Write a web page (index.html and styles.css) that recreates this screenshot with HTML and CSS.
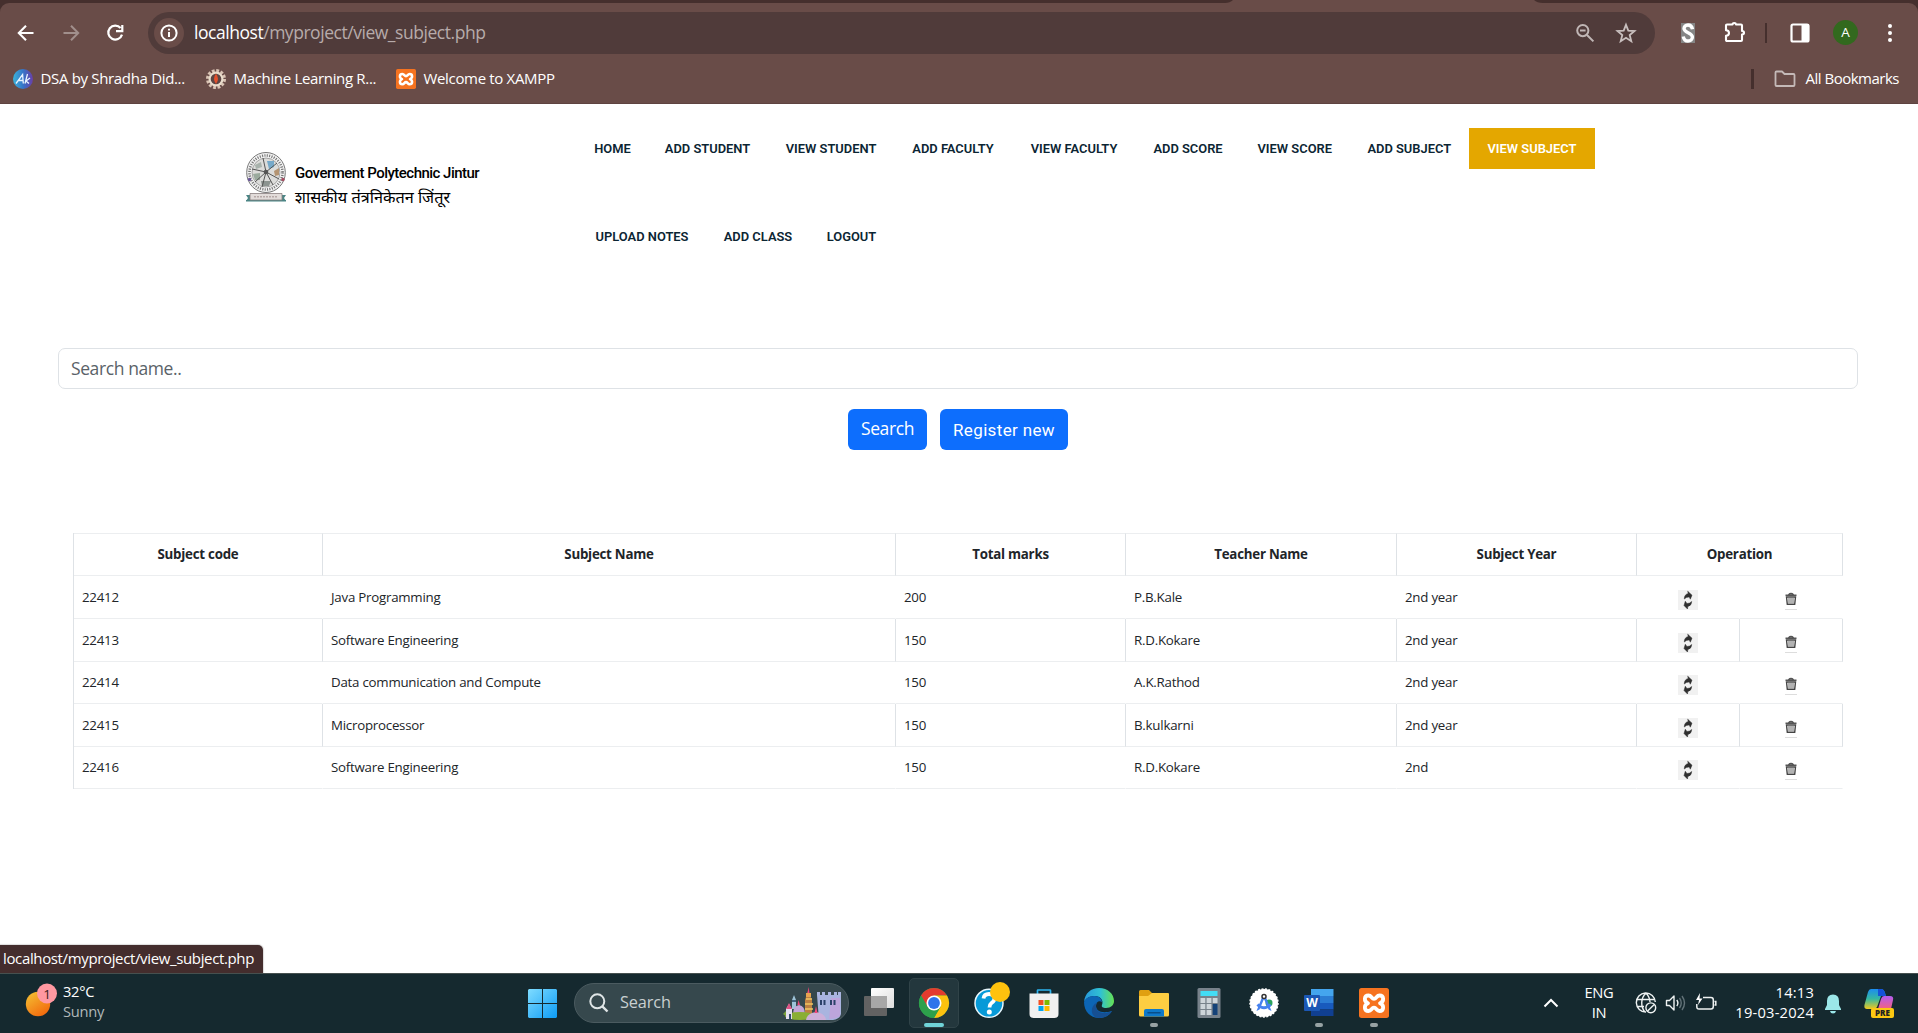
FILE: index.html
```html
<!DOCTYPE html>
<html lang="en">
<head>
<meta charset="utf-8">
<title>View Subject</title>
<link rel="stylesheet" href="styles.css">
</head>
<body>
<div class="screen">

<header class="browser">
  <div class="tabstrip"><svg width="318" height="3" viewBox="0 0 318 3"><path d="M0 3Q5 3 8 0H309Q312 3 318 3Z" fill="#694c48"/></svg></div>
  <div class="toolbar">
    <div class="navbtns">
      <svg width="24" height="24" viewBox="0 0 24 24" fill="none" stroke="#fff" stroke-width="2.1"><path d="M19.5 12H5M12 4.8L4.8 12L12 19.2"/></svg>
      <svg width="24" height="24" viewBox="0 0 24 24" fill="none" stroke="#a18f8c" stroke-width="2"><path d="M4.5 12H19M12 4.8L19.2 12L12 19.2"/></svg>
      <svg width="24" height="24" viewBox="0 0 24 24" fill="none" stroke="#fff" stroke-width="2.2"><path d="M17.6 7A7 7 0 1 0 19 13.6M19.3 4V10.2H13"/></svg>
    </div>
    <div class="omnibox">
      <span class="info"><svg width="20" height="20" viewBox="0 0 20 20" fill="none" stroke="#fff" stroke-width="2"><circle cx="10" cy="10" r="7.6"/><path d="M10 9V14M10 5.8V7.6"/></svg></span>
      <span class="url"><b>localhost</b>/myproject/view_subject.php</span>
      <svg class="zoomout" width="20" height="20" viewBox="0 0 20 20" fill="none" stroke="#c0b6b5" stroke-width="2"><circle cx="7.8" cy="7.6" r="5.6"/><path d="M12 12L18.4 18.4M5 7.6H10.6"/></svg>
      <svg width="22" height="22" viewBox="0 0 22 22" fill="none" stroke="#c8bfbe" stroke-width="1.8"><path d="M11 2.8L13.3 8.6L19.5 9L14.7 13L16.3 19.2L11 15.8L5.7 19.2L7.3 13L2.5 9L8.7 8.6Z"/></svg>
    </div>
    <div class="exts">
      <svg width="14" height="20" viewBox="0 0 14 20"><rect width="14" height="20" fill="#858585"/><path d="M11.5 6.2C11 3.2 9.2 2 7 2C4.600 2 3 3.600 3 5.600C3 10.200 11.400 9.200 11.400 14C11.400 16.600 9.400 18 7 18C4.600 18 2.800 16.600 2.300 13.400" fill="none" stroke="#fff" stroke-width="3.4"/></svg>
      <svg class="puzzle" width="22" height="22" viewBox="0 0 22 22" fill="none" stroke="#fff" stroke-width="2.1" stroke-linejoin="round"><path d="M2 4.500Q2 3.500 3 3.500H8.500Q8.500 2 10.200 2T12 3.500H17Q18 3.500 18 4.500V10Q20 10 20 11.700T18 13.500V19Q18 20 17 20H3Q2 20 2 19V14.800Q5 14.600 5 12T2 9.200Z"/></svg>
      <i class="sep"></i>
      <svg class="panel" width="20" height="20" viewBox="0 0 20 20"><rect x="1.500" y="1.500" width="17" height="17" rx="1.500" fill="none" stroke="#fff" stroke-width="2.200"/><path d="M11.500 1H19V19H11.500Z" fill="#fff"/></svg>
      <span class="avatar">A</span>
      <svg class="dots" width="6" height="20" viewBox="0 0 6 20" fill="#fff"><circle cx="3" cy="3" r="2"/><circle cx="3" cy="10" r="2"/><circle cx="3" cy="17" r="2"/></svg>
    </div>
  </div>
  <div class="bookmarks">
    <svg width="20" height="20" viewBox="0 0 20 20"><defs><linearGradient id="dsa"><stop offset="0" stop-color="#3ab5dc"/><stop offset=".5" stop-color="#3575c8"/><stop offset="1" stop-color="#6a3ea8"/></linearGradient></defs><circle cx="10" cy="10" r="10" fill="url(#dsa)"/><path d="M3 14.500L9.600 5.500L10.300 14.500M5.500 11.500H10M14.500 5L12 14.500M17 9L13 12L16 14.500" fill="none" stroke="#e8f4ff" stroke-width="1.300"/></svg>
    <span class="bm b1">DSA by Shradha Did...</span>
    <svg width="20" height="20" viewBox="0 0 20 20"><circle cx="10" cy="10" r="8.500" fill="none" stroke="#d9c3b4" stroke-width="3" stroke-dasharray="2.800 1.650"/><circle cx="10" cy="10" r="7.500" fill="#e9dccb"/><circle cx="10" cy="10" r="5.300" fill="#5b4644"/><path d="M10 4.500Q14 10 10 15Q6 10 10 4.500" fill="#e2502c"/></svg>
    <span class="bm b2">Machine Learning R...</span>
    <svg width="20" height="20" viewBox="0 0 30 30"><use href="#xampp"/></svg>
    <span class="bm b3">Welcome to XAMPP</span>
    <i class="sep2"></i>
    <svg class="fold" width="22" height="18" viewBox="0 0 22 18" fill="none" stroke="#c4b9b7" stroke-width="1.800" stroke-linejoin="round"><path d="M1.500 2.500Q1.500 1.500 2.500 1.500H8L10.500 4H19.500Q20.500 4 20.500 5V15Q20.500 16 19.500 16H2.500Q1.500 16 1.500 15Z"/></svg>
    <span class="bm b4">All Bookmarks</span>
  </div>
</header>

<main class="page">
  <div class="site-head">
    <svg class="emblem" width="40" height="50" viewBox="0 0 40 50">
      <ellipse cx="20" cy="20.500" rx="19.300" ry="20" fill="#f3f3f3" stroke="#777" stroke-width="1"/>
      <ellipse cx="20" cy="20.500" rx="16.500" ry="17" fill="none" stroke="#777" stroke-width="2.600" stroke-dasharray="1.100 1.300"/>
      <ellipse cx="20" cy="20.500" rx="14" ry="14.500" fill="#dcdcda" stroke="#888" stroke-width=".7"/>
      <path d="M9 13L15 10L16 15L10 17Z" fill="#a8b2ac"/><path d="M21 9L28 9L28 15L23 17Z" fill="#76a9c9"/><path d="M28 19L33 16V23L29 24Z" fill="#b49472"/><path d="M7 22L14 21V28L9 28Z" fill="#9aaa9d"/><path d="M15 29H25L23 34H16Z" fill="#8c9490"/>
      <path d="M20 20L17 6M20 20L31 11M20 20L33 27M20 20L16 35M20 20L6 17M20 20L27 33M20 20L9 30" stroke="#555" stroke-width="1"/>
      <circle cx="20" cy="20" r="2.300" fill="#555"/><circle cx="3.500" cy="27.500" r="1.700" fill="#6a5799"/><circle cx="37" cy="27.500" r="1.700" fill="#a44d62"/>
      <path d="M0 43H7V49H0L2 46ZM40 43H33V49H40L38 46Z" fill="#4b8585"/><path d="M0 48H40V49.500H0Z" fill="#4b8585"/><path d="M4 41.500H36V48H4Z" fill="#e2dcda" stroke="#897d7d" stroke-width=".8"/><path d="M8 44.800H32" stroke="#b6a9a7" stroke-width="1.400" stroke-dasharray="2 1"/>
    </svg>
    <div class="brand"><div class="en">Goverment Polytechnic Jintur</div><div class="mr" lang="mr">शासकीय तंत्रनिकेतन जिंतूर</div></div>
    <nav class="menu">
      <div class="row r1"><a>HOME</a><a>ADD STUDENT</a><a>VIEW STUDENT</a><a>ADD FACULTY</a><a>VIEW FACULTY</a><a>ADD SCORE</a><a>VIEW SCORE</a><a>ADD SUBJECT</a><a class="on">VIEW SUBJECT</a></div>
      <div class="row r2"><a>UPLOAD NOTES</a><a>ADD CLASS</a><a>LOGOUT</a></div>
    </nav>
  </div>

  <div class="search"><span>Search name..</span></div>
  <div class="buttons"><a class="btn s">Search</a><a class="btn r">Register new</a></div>

  <table class="grid">
    <colgroup><col class="c1"><col class="c2"><col class="c3"><col class="c4"><col class="c5"><col class="c6"><col class="c7"></colgroup>
    <tr class="h43"><th>Subject code</th><th>Subject Name</th><th>Total marks</th><th>Teacher Name</th><th>Subject Year</th><th colspan="2">Operation</th></tr>
    <tr class="h43"><td>22412</td><td>Java Programming</td><td>200</td><td>P.B.Kale</td><td>2nd year</td><td class="op"><svg><use href="#upd"/></svg></td><td class="op"><svg><use href="#del"/></svg></td></tr>
    <tr class="h43 lined"><td>22413</td><td>Software Engineering</td><td>150</td><td>R.D.Kokare</td><td>2nd year</td><td class="op"><svg><use href="#upd"/></svg></td><td class="op"><svg><use href="#del"/></svg></td></tr>
    <tr class="h42"><td>22414</td><td>Data communication and Compute</td><td>150</td><td>A.K.Rathod</td><td>2nd year</td><td class="op"><svg><use href="#upd"/></svg></td><td class="op"><svg><use href="#del"/></svg></td></tr>
    <tr class="h43 lined"><td>22415</td><td>Microprocessor</td><td>150</td><td>B.kulkarni</td><td>2nd year</td><td class="op"><svg><use href="#upd"/></svg></td><td class="op"><svg><use href="#del"/></svg></td></tr>
    <tr class="h42"><td>22416</td><td>Software Engineering</td><td>150</td><td>R.D.Kokare</td><td>2nd</td><td class="op"><svg><use href="#upd"/></svg></td><td class="op"><svg><use href="#del"/></svg></td></tr>
  </table>
  <div class="status">localhost/myproject/view_subject.php</div>
</main>

<footer class="taskbar">
  <div class="weather">
    <svg width="34" height="36" viewBox="0 0 34 36"><defs><linearGradient id="sun" x1="0" y1="0" x2=".7" y2="1"><stop offset="0" stop-color="#f4c535"/><stop offset="1" stop-color="#f2690d"/></linearGradient></defs><circle cx="13" cy="21" r="12.200" fill="url(#sun)"/><circle cx="22" cy="10.500" r="10" fill="#ff98a1"/><text x="22" y="15.500" text-anchor="middle" class="badge-n">1</text></svg>
    <div class="two"><div>32°C</div><div class="dim">Sunny</div></div>
  </div>
  <svg class="start" width="29" height="29" viewBox="0 0 29 29"><defs><linearGradient id="win" x1="0" y1="0" x2="1" y2="1"><stop offset="0" stop-color="#7fdcff"/><stop offset="1" stop-color="#0d9bf5"/></linearGradient></defs><path d="M1 0H14V14H0V1ZM15 0H28L29 1V14H15ZM0 15H14V29H1L0 28ZM15 15H29V28L28 29H15Z" fill="url(#win)"/></svg>
  <div class="tsearch">
    <svg width="20" height="20" viewBox="0 0 20 20" fill="none" stroke="#dfe5e6" stroke-width="2"><circle cx="8.300" cy="8.300" r="7"/><path d="M13.300 13.300L18.500 18.500" stroke-width="2.400"/></svg>
    <span>Search</span>
    <svg class="castle" width="58" height="33" viewBox="0 0 58 33">
      <path d="M34 8V5H37V8H39V5H42V8H45V5H48V8H51V5H54V8H55V5H58V27Q57 32 50 33H36Z" fill="#a9b4df"/><path d="M48 11H57V29Q53 32 46 32Z" fill="#bda5dc"/><path d="M37 13H39V18H37ZM40.500 13H42.500V18H40.500ZM47 13H49V18H47ZM50.500 13H52.500V18H50.500Z" fill="#2b4169"/>
      <path d="M22 29V13L25 4L29 13V29Z" fill="#bd8044"/><path d="M23 12H29M22 17H30M22 22H30" stroke="#f1c661" stroke-width="1.300"/><path d="M23 6H28V10H23Z" fill="#e9a450"/><path d="M24.500 6L25.500 0L26.500 6Z" fill="#ef4779"/>
      <path d="M9 22V13L11 8L13 13V22Z" fill="#9ec3d8"/><path d="M9 14H13" stroke="#42657e" stroke-width="2"/>
      <path d="M10 27Q10 19 16 18Q22 19 22 27Z" fill="#c5a5d7"/><path d="M14.500 18L15.500 13L17 18Z" fill="#ef4779"/>
      <ellipse cx="17" cy="29" rx="15" ry="4" fill="#8aae35"/><path d="M0 27L4 23V30Z" fill="#7ba13a"/><path d="M3 22L6 17L9 22V32H3Z" fill="#e5dff0"/><path d="M3 22L6 16L9 22Z" fill="#df5587"/><path d="M6 27H8V32H6Z" fill="#334d6d"/>
      <path d="M23 33Q24 26 33 25Q42 26 43 33Z" fill="#cdafd9"/><path d="M31.500 26L33 19L34.500 26Z" fill="#ef4779"/>
    </svg>
  </div>
  <svg class="tview" width="30" height="28" viewBox="0 0 30 28"><defs><linearGradient id="tv" x2="1" y2="1"><stop offset="0" stop-color="#fff"/><stop offset="1" stop-color="#ddd"/></linearGradient></defs><rect x="7" width="23" height="20" rx="1" fill="url(#tv)"/><rect y="8" width="23" height="20" rx="1" fill="#626262"/><path d="M7 8H23V20H7Z" fill="#a7a7a7"/></svg>
  <div class="apps">
    <span class="app active"><svg viewBox="0 0 30 30"><circle cx="15" cy="15" r="15" fill="#2da94f"/><path d="M2 7.500A15 15 0 0 1 28 7.500H15L8.500 18.700Z" fill="#e33b2e"/><path d="M28 7.500A15 15 0 0 1 15 30L21.500 18.700L15 7.500Z" fill="#fdc20f"/><path d="M2 7.500A15 15 0 0 0 15 30L21.500 18.700L8.500 18.700Z" fill="#2da04b"/><circle cx="15" cy="15" r="7.500" fill="#fff"/><circle cx="15" cy="15" r="5.900" fill="#2d74ea"/></svg></span>
    <span class="app"><svg viewBox="0 0 30 30"><circle cx="15" cy="15.300" r="14" fill="#079ad8" stroke="#e9f7fd" stroke-width="1.500"/><path d="M9.500 10.500Q10 6 15 6Q20.500 6 20.500 10.500Q20.500 13 17.500 15Q15.500 16.500 15.500 19.500" fill="none" stroke="#fff" stroke-width="3.800"/><circle cx="15.300" cy="24" r="2.500" fill="#fff"/><circle cx="26" cy="4" r="10" fill="#ffc20e"/></svg></span>
    <span class="app"><svg viewBox="0 0 30 30"><path d="M8.500 7V2.500Q8.500 2 9 2H21Q21.500 2 21.500 2.500V7" fill="none" stroke="#2db4ef" stroke-width="1.700"/><path d="M.5 5.500H29.500V26Q29.500 30 25.500 30H4.500Q.5 30 .5 26Z" fill="#f0f0f0"/><path d="M9.500 12H14.500V17H9.500Z" fill="#f25022"/><path d="M15.500 12H20.500V17H15.500Z" fill="#7fba00"/><path d="M9.500 18H14.500V23H9.500Z" fill="#00a4ef"/><path d="M15.500 18H20.500V23H15.500Z" fill="#ffb900"/></svg></span>
    <span class="app"><svg viewBox="0 0 30 30"><defs><linearGradient id="eg" x1="0" x2="1"><stop offset="0" stop-color="#2798dc"/><stop offset=".55" stop-color="#30c1d3"/><stop offset="1" stop-color="#66e253"/></linearGradient></defs><path d="M0 14C1 5 7 0 15 0C24 0 30 6 30 13C30 17 27 20 22 20C19 20 17 19 18 17C20 12 16 8 11 8C6 8 2 10 0 14Z" fill="url(#eg)"/><path d="M0 14C2 9 7 8 11 8C15 8 18 11 18 14C15 12 12 14 12 18C12 23 18 26 28 23C25 28 20 30 15 30C7 30 0 24 0 14Z" fill="#0c65b5"/><path d="M12 18C12 25 20 27 28 23C24 30 15 31 11 29C6 26 7 17 13 14.500Q12 16 12 18Z" fill="#164f92"/></svg></span>
    <span class="app open"><svg viewBox="0 0 30 30"><path d="M0 3.500Q0 2 1.500 2H10L13 5H24V12H0Z" fill="#e0a011"/><path d="M0 8H9L13 5H29Q30 5 30 6V27Q30 28.500 28.500 28.500H1.500Q0 28.500 0 27Z" fill="#fdcd42"/><path d="M5 28.500V23Q5 21 7 21H23Q25 21 25 23V28.500Z" fill="#0e79ca"/><path d="M9 24.700H21" stroke="#084e89" stroke-width="1.500" stroke-linecap="round"/></svg></span>
    <span class="app"><svg viewBox="0 0 30 30"><rect x="3.500" width="23" height="30" rx="1.500" fill="#78828b"/><path d="M6.500 3H23.500V8H6.500Z" fill="#43dcf4"/><path d="M6.500 10H11.300V15H6.500ZM12.600 10H17.400V15H12.600ZM18.700 10H23.500V15H18.700ZM6.500 16H11.300V21H6.500ZM12.600 16H17.400V21H12.600ZM6.500 22H11.300V27H6.500ZM12.600 22H17.400V27H12.600Z" fill="#ced5da"/><path d="M18.700 16H23.500V27H18.700Z" fill="#154278"/></svg></span>
    <span class="app"><svg viewBox="0 0 30 30"><circle cx="15" cy="15" r="14" fill="#fff"/><circle cx="15" cy="15" r="14" fill="none" stroke="#fff" stroke-width="1.500" stroke-dasharray="2 1.500"/><circle cx="20" cy="15" r="3.500" fill="#2ba35d"/><path d="M13.500 8L7.500 23L10.500 21.500L15 11L19.500 21.500L22.500 23L16.500 8Z" fill="#4682ef"/><path d="M8.500 16.500Q15 23 21.500 16.500" fill="none" stroke="#4682ef" stroke-width="3"/><circle cx="15" cy="8.500" r="2" fill="#fff" stroke="#333" stroke-width="1.500"/></svg></span>
    <span class="app open"><svg viewBox="0 0 30 30"><path d="M7 1H29.500V8H7Z" fill="#44a5ee"/><path d="M7 8H29.500V15H7Z" fill="#2b7cd3"/><path d="M7 15H29.500V21.500H7Z" fill="#185abd"/><path d="M7 21.500H29.500V28H7Z" fill="#103f91"/><rect y="7" width="16" height="16" rx="1" fill="#1b57b5"/><text x="8" y="19" text-anchor="middle" class="word">W</text></svg></span>
    <span class="app open"><svg viewBox="0 0 30 30"><g id="xampp"><rect width="30" height="30" rx="2.500" fill="#f67320"/><path d="M9 15.200C4.500 13.500 5 7.500 9.500 7.500C12.500 7.500 12.500 10.800 15 10.800S17.500 7.500 20.500 7.500C25 7.500 25.500 13.500 21 15.200C25.500 17 25 23 20.500 23C17.500 23 17.500 19.700 15 19.700S12.500 23 9.500 23C5 23 4.500 17 9 15.200Z" fill="none" stroke="#fff" stroke-width="3.800" stroke-linejoin="round"/></g></svg></span>
  </div>
  <div class="tray">
    <svg class="chev" width="16" height="10" viewBox="0 0 16 10" fill="none" stroke="#fff" stroke-width="2"><path d="M1.500 8.500L8 2L14.500 8.500"/></svg>
    <div class="two lang"><div>ENG</div><div>IN</div></div>
    <svg class="globe" width="22" height="22" viewBox="0 0 22 22" fill="none" stroke="#eef2f2" stroke-width="1.400"><path d="M11 20A9.500 9.500 0 1 1 20.300 10M11 1.200C5.500 6 5.500 15 10 20M11 1.200Q14.800 5 15 10M2 7.500H19.500M2 14.500H9"/><circle cx="15.800" cy="15.800" r="4.900"/><path d="M12.600 19L19 12.700"/></svg>
    <svg class="vol" width="22" height="20" viewBox="0 0 22 20" fill="none" stroke="#eef2f2" stroke-width="1.400"><path d="M1.500 7.500H4.500L9 3V17L4.500 12.500H1.500Z" stroke-linejoin="round"/><path d="M11.800 7Q14 10 11.800 13"/><path d="M14.500 5Q18 10 14.500 15M17 3Q22 10 17 17" stroke="#627278"/></svg>
    <svg class="bat" width="22" height="20" viewBox="0 0 22 20" fill="none" stroke="#eef2f2" stroke-width="1.500"><path d="M8 4.500H16Q18.300 4.500 18.300 7V13.500Q18.300 16 16 16H4Q1.800 16 1.800 13.500V11M19.500 8.500H20.800V12H19.500"/><path d="M5 0L1 7H4L3 12L7.500 5.500H4.500Z" fill="#fff" stroke="none"/></svg>
    <div class="two clock"><div>14:13</div><div>19-03-2024</div></div>
    <svg class="bell" width="18" height="20" viewBox="0 0 18 20" fill="#9be7e9"><path d="M9 .5Q15 .5 15 7V11L17 15V16H1V15L3 11V7Q3 .5 9 .5ZM6 17H12Q11.500 19.500 9 19.500T6 17Z"/></svg>
    <svg class="pilot" width="30" height="29" viewBox="0 0 30 29"><defs><linearGradient id="p1" x1="0" y1="0" x2="0" y2="1"><stop offset="0" stop-color="#1b8df0"/><stop offset=".5" stop-color="#36b8a0"/><stop offset="1" stop-color="#f2c81e"/></linearGradient><linearGradient id="p2" x1="0" y1="0" x2="0" y2="1"><stop offset="0" stop-color="#b35cf0"/><stop offset="1" stop-color="#f4627e"/></linearGradient></defs><path d="M7 0H17Q20 0 21 4L22 7H17L13 18Q12 20 9 20H3Q-1 20 1 14L4 3Q5 0 7 0Z" fill="url(#p1)"/><path d="M14 0H17Q20 0 21 4L22 7H14Z" fill="#1551d8"/><path d="M20 7H26Q30 7 29 11L27 20H14L17 10Q18 7 20 7Z" fill="url(#p2)"/><rect x="7" y="19" width="23" height="10" rx="2" fill="#fcc812"/><text x="18.500" y="27.300" text-anchor="middle" class="pre">PRE</text></svg>
  </div>
</footer>
</div>

<svg class="defs" aria-hidden="true">
  <symbol id="upd" viewBox="0 0 20 20"><path d="M0 0H20V20H0Z" fill="#f1f1f1"/><path d="M6.300 9Q6.200 4.500 10.200 3.500L9.700 1.200L14 5.200L12.300 9.200L11.300 7Q8.300 6.800 6.300 9ZM13.700 11.500Q13.500 15.800 9.800 16.500L9.500 19L6 15.500L7.300 11.200L8.900 13.500Q11.700 13.700 13.700 11.500Z" fill="#2e2e2e" stroke="#2e2e2e" stroke-width=".5"/></symbol>
  <symbol id="del" viewBox="0 0 20 20"><path d="M4.500 5.300H15.500M7.500 4.800Q10 2.300 12.500 4.800" fill="none" stroke="#555" stroke-width="1.400"/><path d="M5.500 7H14.500L13.700 14.300H6.300Z" fill="none" stroke="#444" stroke-width="1.400"/><path d="M8 8V13M10 8V13M12 8V13" stroke="#666" stroke-width="1"/><path d="M4 19.500H16" stroke="#ddd"/></symbol>
</svg>
</body>
</html>
```
FILE: styles.css
```css
* { box-sizing: border-box; }
body { margin: 0; background: #fff; font-family: "Open Sans", "Noto Sans", sans-serif; }
svg { display: block; flex: none; }
.defs { position: absolute; top: 0; width: 0; height: 0; }
.screen { width: 1918px; height: 1033px; display: flex; flex-direction: column; overflow: hidden; }

/* browser chrome */
.browser { height: 104px; background: #452f2d; }
.tabstrip { height: 3px; padding-left: 1225px; }
.toolbar { height: 59px; background: #694c48; border-radius: 9px 9px 0 0; display: flex; align-items: center; padding-left: 14px; }
.navbtns { display: flex; gap: 20.500px; width: 134px; }
.omnibox { width: 1507px; height: 42px; background: #503b3a; border-radius: 21px; display: flex; align-items: center; padding: 0 18px 0 6px; }
.info { width: 30px; height: 30px; border-radius: 50%; background: #694c48; display: grid; place-items: center; }
.url { flex: 1; margin: -2px 0 0 10px; font-size: 17.500px; letter-spacing: -.46px; color: #b7abaa; }
.url b { font-weight: 400; color: #fff; }
.zoomout { margin-right: 20px; }
.exts { display: flex; align-items: center; margin-left: 26px; }
.puzzle { margin-left: 29px; margin-top: -1px; }
.sep { width: 2px; height: 20px; background: #452f2d; margin: 0 23px 0 19px; }
.avatar { margin: 0 29px 0 23px; width: 25px; height: 25px; border-radius: 50%; background: #32691e; color: #fff; font-size: 13.500px; line-height: 25px; text-align: center; }
.bookmarks { height: 42px; background: #694c48; border-bottom: 1px solid #5e4340; display: flex; align-items: center; padding: 0 19px 8px 13px; }
.bm { font-size: 15px; letter-spacing: -.33px; color: #fff; white-space: nowrap; margin: -2px 0 0 7.500px; }
.b1 { width: 165.500px; }
.b2 { width: 162.500px; }
.b3 { flex: 1; }
.b4 { letter-spacing: -.5px; }
.sep2 { width: 3px; height: 20px; background: #452f2d; }
.fold { margin: 0 2px 0 20px; }

/* page */
.page { height: 869px; position: relative; }
.site-head { display: flex; height: 244px; padding: 24px 0 0 246px; }
.emblem { margin-top: 24px; }
.brand { width: 283px; margin: 33px 0 0 9px; color: #000; }
.en { font: 500 15px/24px Roboto, sans-serif; letter-spacing: -.52px; white-space: nowrap; }
.mr { font: 400 16.250px/28px "Noto Sans Devanagari", "Noto Sans", sans-serif; white-space: nowrap; }
.row { display: grid; height: 88px; align-items: start; }
.r1 { grid-template-columns: 69px 121px 126px 118px 124px 104px 109.500px 119.500px 126px; }
.r2 { grid-template-columns: 128px 104px 83px; }
.row a { height: 41px; font: 600 12.900px/42px Roboto, sans-serif; color: #0b2533; text-align: center; white-space: nowrap; }
.row a.on { background: #e4a700; color: #fff; }
.search { width: 1800px; height: 41px; margin-left: 58px; border: 1px solid #dee2e6; border-radius: 7px; padding-left: 12px; font-size: 17.500px; line-height: 38px; letter-spacing: -.4px; color: #5a6268; }
.buttons { display: flex; gap: 13px; padding: 20px 0 0 848px; }
.btn { height: 41px; border-radius: 6px; background: #0d6efd; color: #fff; font-size: 17.500px; line-height: 39px; text-align: center; letter-spacing: -.4px; white-space: nowrap; }
.s { width: 79px; }
.r { width: 128px; font: 400 17px/42px Roboto, sans-serif; letter-spacing: .35px; }
.grid { width: 1770px; margin: 83px 0 0 73px; table-layout: fixed; border-spacing: 0; color: #212529; font-size: 13.300px; letter-spacing: -.24px; border-left: 1px solid #dee2e6; }
.c1 { width: 248px; }
.c2 { width: 573px; }
.c3 { width: 230px; }
.c4 { width: 271px; }
.c5 { width: 240px; }
.c6 { width: 103px; }
.c7 { width: 104px; }
.h43 { height: 43px; }
.h42 { height: 42px; }
.grid th, .grid td { padding: 0 8px 1px; border-bottom: 1px solid #eceef0; border-left: 1px solid transparent; line-height: 20px; white-space: nowrap; }
.grid th { border-top: 1px solid #eceef0; font-weight: 700; }
.grid th + th, .lined td + td { border-left-color: #dee2e6; }
.grid th:first-child, .grid td:first-child { border-left: 0; }
.grid th:last-child, .lined td:last-child { border-right: 1px solid #dee2e6; }
.grid td:last-child { border-right: 1px solid transparent; }
.grid .lined td:last-child { border-right-color: #dee2e6; }
.grid .op { padding: 5px 0 0; }
.op svg { width: 20px; height: 20px; margin: 0 auto; }
.status { position: absolute; left: 0; bottom: 0; width: 263px; height: 28px; background: #442d2d; border-top-right-radius: 5px; box-shadow: 0 0 1px 1px #ddd; color: #fff; font-size: 15px; line-height: 26px; padding-left: 3px; letter-spacing: -.36px; white-space: nowrap; }

/* taskbar */
.taskbar { height: 60px; background: #15292f; border-top: 1px solid #46504f; display: flex; align-items: center; padding-bottom: 1px; color: #fff; position: relative; }
.weather { display: flex; width: 528px; padding-left: 25px; }
.weather svg { margin-top: -2px; }
.badge-n { font: 13.500px "Open Sans", sans-serif; fill: #3b1c20; }
.two { font-size: 14.700px; line-height: 20px; letter-spacing: -.3px; margin-top: -2px; }
.weather .two { margin: -4px 0 0 4px; }
.dim { color: #b0b8ba; }
.tsearch { margin-left: 17px; width: 275px; height: 40px; border-radius: 20px; background: #36484d; border: 1px solid #4b5b60; display: flex; align-items: center; padding: 0 7px 0 14px; }
.tsearch span { flex: 1; margin: -2px 0 0 11px; font-size: 16.300px; letter-spacing: -.1px; color: #c9d0d1; }
.tview { margin: -2px 15px 0; }
.apps { display: flex; gap: 5px; }
.app { width: 50px; height: 50px; display: grid; place-items: center; border-radius: 5px; border: 1px solid transparent; position: relative; }
.app svg { width: 30px; height: 30px; overflow: visible; }
.active { background: #23373d; border-color: #304348; }
.active::after, .open::after { content: ""; position: absolute; bottom: 0; left: 20px; width: 8px; height: 4px; border-radius: 2px; background: #97a2a4; }
.active::after { left: 14px; width: 20px; background: #70d3d8; }
.word { font: 700 12px "Open Sans", sans-serif; fill: #fff; }
.tray { margin-left: auto; padding-right: 24px; display: flex; align-items: center; }
.lang { width: 50px; margin-left: 15px; text-align: center; }
.globe { margin-left: 11px; }
.vol { margin-left: 8px; }
.bat { margin-left: 8px; }
.clock { width: 97px; text-align: right; letter-spacing: .2px; }
.bell { margin: 1px 22px 0 10px; }
.pre { font: 800 8px "Open Sans", sans-serif; fill: #222; }
```
